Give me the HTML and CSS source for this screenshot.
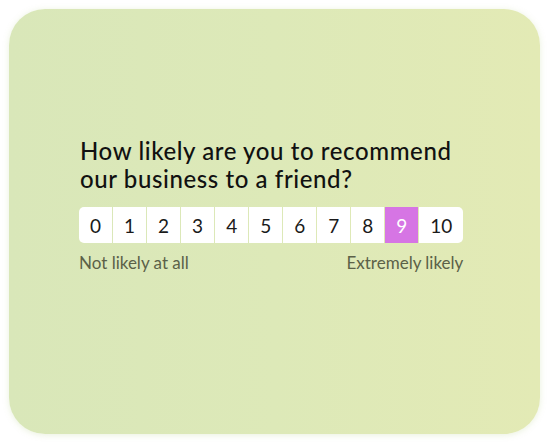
FILE: index.html
```html
<!DOCTYPE html>
<html>
<head>
<meta charset="utf-8">
<link rel="stylesheet" href="styles.css">
</head>
<body>
<div class="card">
  <div class="survey">
    <h1 class="question">How likely are you to recommend<br>our business to a friend?</h1>
    <div class="scale-wrap">
      <div class="scale">
        <div class="cell">0</div>
        <div class="cell">1</div>
        <div class="cell">2</div>
        <div class="cell">3</div>
        <div class="cell">4</div>
        <div class="cell">5</div>
        <div class="cell">6</div>
        <div class="cell">7</div>
        <div class="cell">8</div>
        <div class="cell selected">9</div>
        <div class="cell">10</div>
      </div>
      <div class="labels">
        <span>Not likely at all</span>
        <span>Extremely likely</span>
      </div>
    </div>
  </div>
</div>
</body>
</html>
```
FILE: styles.css
```css
html, body {
  margin: 0;
  padding: 0;
  background: #ffffff;
}
body {
  font-family: Lato, "Noto Sans", sans-serif;
}
.card {
  margin: 9px;
  width: 531px;
  height: 425px;
  box-sizing: border-box;
  border-radius: 36px;
  background: linear-gradient(90deg, #d9e7b9 0%, #dde9b8 50%, #e3eab5 100%);
  box-shadow: 0 1px 6px rgba(170, 200, 120, 0.25);
  padding: 128px 0 0 70px;
}
.survey {
  display: inline-flex;
  flex-direction: column;
}
.question {
  margin: 0 0 14px 1px;
  font-size: 24px;
  line-height: 28px;
  font-weight: 500;
  color: #111111;
  letter-spacing: 0.6px;
}
.scale {
  display: flex;
  gap: 1px;
  border-radius: 5px;
  overflow: hidden;
}
.cell {
  height: 36px;
  padding: 0 11px;
  min-width: 10px;
  background: #ffffff;
  display: flex;
  align-items: center;
  justify-content: center;
  font-size: 19px;
  color: #1a1a1a;
}
.cell.selected {
  background: #d675e4;
  color: #ffffff;
}
.labels {
  display: flex;
  justify-content: space-between;
  margin-top: 9px;
  font-size: 17px;
  color: #5b6148;
}
```
